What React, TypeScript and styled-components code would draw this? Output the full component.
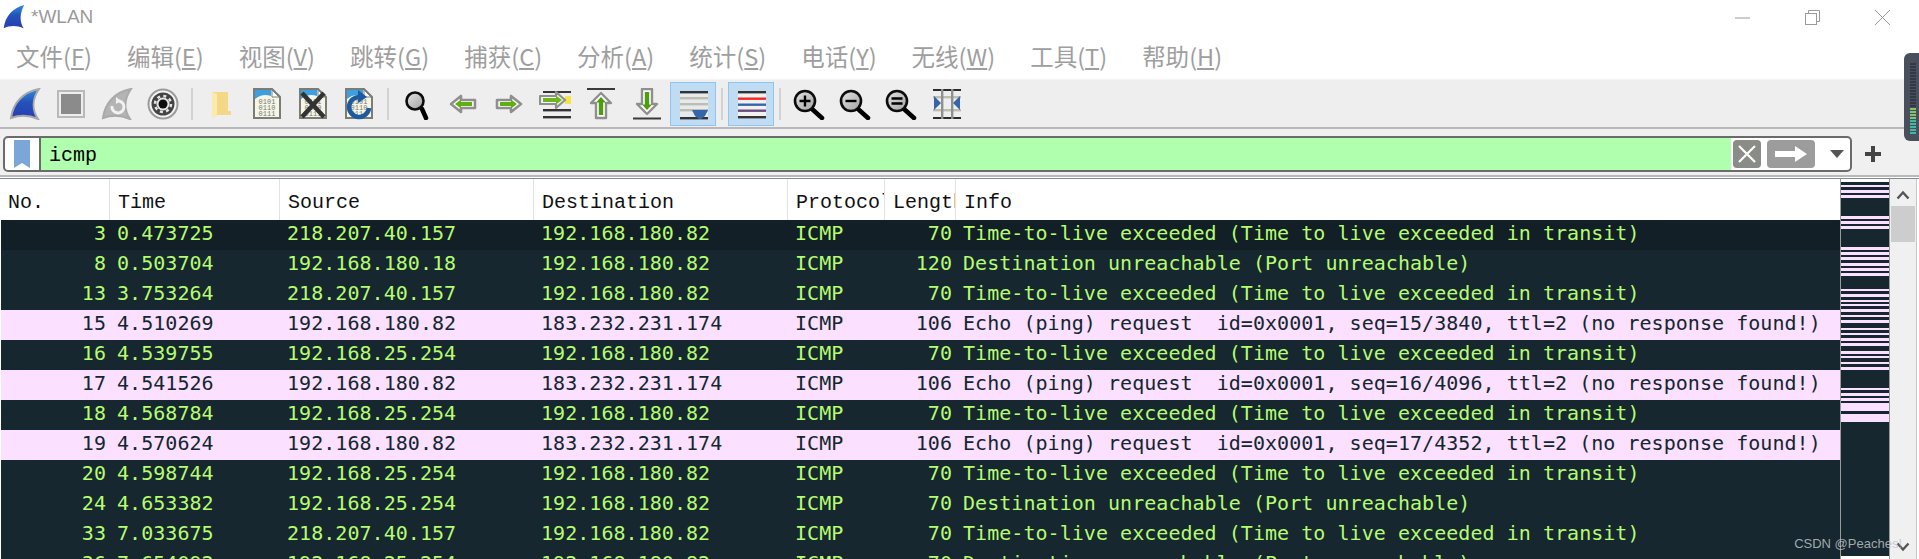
import React from 'react';
import styled, { createGlobalStyle } from 'styled-components';

const GlobalStyle = createGlobalStyle`
  html, body { margin: 0; padding: 0; background: #fff; }
  body { font-family: "Liberation Sans", sans-serif; overflow: hidden; }
`;

const Page = styled.div`
  position: relative;
  width: 1919px;
  height: 559px;
  overflow: hidden;
  display: flex;
  flex-direction: column;
  background: #fff;
`;

const TitleBar = styled.div`
  height: 34px;
  display: flex;
  align-items: center;
  padding: 0 2px 0 3px;
`;

const TitleText = styled.div`
  flex: 1;
  margin-left: 6px;
  font-size: 19px;
  color: #9a9a9a;
`;

const WinButton = styled.div`
  width: 70px;
  height: 34px;
  display: flex;
  align-items: center;
  justify-content: center;
`;

const MenuBar = styled.div`
  height: 43px;
  display: flex;
  align-items: center;
  gap: 35px;
  padding-left: 16px;
`;

const MenuItem = styled.div`
  font-family: "Noto Sans CJK SC", "Liberation Sans", sans-serif;
  font-size: 23.5px;
  line-height: 40px;
  color: #9e9e9e;
  white-space: nowrap;
  u { text-underline-offset: 2px; }
`;

const Toolbar = styled.div`
  height: 47px;
  margin-top: 2px;
  display: flex;
  align-items: center;
  padding-left: 2px;
  background: #eeeeee;
  border-top: 1px solid #f4f4f4;
  border-bottom: 2px solid #b8b8b8;
`;

const ToolButton = styled.div<{ $active?: boolean }>`
  width: 46px;
  height: 44px;
  box-sizing: border-box;
  display: flex;
  align-items: center;
  justify-content: center;
  background: ${({ $active }) => ($active ? '#bfdcf3' : 'transparent')};
  border: 1px solid ${({ $active }) => ($active ? '#8cc6f7' : 'transparent')};
`;

const ToolSep = styled.div`
  width: 12px;
  display: flex;
  justify-content: center;
  &::after {
    content: '';
    width: 2px;
    height: 32px;
    background: #d2d2d2;
  }
`;

const FilterBar = styled.div`
  height: 48px;
  box-sizing: border-box;
  padding: 7px 0 3px 3px;
  display: flex;
  align-items: flex-start;
  background: #f0f0f0;
  border-bottom: 2px solid #b8b8b8;
`;

const FilterBox = styled.div`
  width: 1849px;
  height: 36px;
  box-sizing: border-box;
  display: flex;
  align-items: stretch;
  background: #fff;
  border: 2px solid #6b6b6b;
  border-radius: 5px;
  overflow: hidden;
`;

const BookmarkSlot = styled.div`
  width: 34px;
  display: flex;
  align-items: center;
  justify-content: center;
  border-right: 2px solid #6b6b6b;
`;

const FilterInput = styled.div`
  flex: 1;
  padding: 2px 0 0 8px;
  display: flex;
  align-items: center;
  background: #afffaf;
  font-family: "Liberation Mono", monospace;
  font-size: 20px;
  color: #000;
`;

const FilterActions = styled.div`
  width: 119px;
  display: flex;
  align-items: center;
  padding-left: 2px;
  box-sizing: border-box;
`;

const ClearButton = styled.div`
  width: 28px;
  height: 28px;
  border-radius: 4px;
  background: #8a8c87;
  display: flex;
  align-items: center;
  justify-content: center;
`;

const ApplyButton = styled.div`
  width: 48px;
  height: 28px;
  margin-left: 6px;
  border-radius: 4px;
  background: #9c9c9c;
  display: flex;
  align-items: center;
  justify-content: center;
`;

const DropArrow = styled.div`
  margin-left: 15px;
  width: 0;
  height: 0;
  border-left: 7px solid transparent;
  border-right: 7px solid transparent;
  border-top: 8px solid #555;
`;

const PlusSlot = styled.div`
  margin: 10px 0 0 13px;
  display: flex;
`;

const PacketArea = styled.div`
  flex: 1;
  min-height: 0;
  margin-top: 1px;
  border-top: 1px solid #7f8b90;
  display: flex;
`;

const PacketList = styled.div`
  width: 1841px;
  box-sizing: border-box;
  overflow: hidden;
  border-right: 1px solid #9a9a9a;
`;

const dataColumns = '170px 254px 254px 97px 71px 1fr';

const HeaderRow = styled.div`
  display: grid;
  grid-template-columns: 110px ${dataColumns};
  height: 41px;
`;

const HeaderCell = styled.div`
  padding: 5px 0 0 8px;
  display: flex;
  align-items: center;
  overflow: hidden;
  white-space: nowrap;
  font-family: "Liberation Mono", monospace;
  font-size: 20px;
  color: #111;
  border-right: 1px solid #e2e2e2;
  &:last-child { border-right: 0; }
`;

const Row = styled.div<{ $kind: 'ttl' | 'ttlDark' | 'echo' }>`
  display: grid;
  grid-template-columns: 109px ${dataColumns};
  height: 30px;
  margin-left: 1px;
  align-items: center;
  font-family: "DejaVu Sans Mono", monospace;
  font-size: 20px;
  letter-spacing: 0.04px;
  line-height: 26px;
  white-space: pre;
  background: ${({ $kind }) =>
    $kind === 'echo' ? '#fce0ff' : $kind === 'ttlDark' ? '#121f26' : '#16272f'};
  color: ${({ $kind }) => ($kind === 'echo' ? '#12272e' : '#b5fc6f')};
`;

const Cell = styled.div<{ $right?: boolean }>`
  padding: 0 ${({ $right }) => ($right ? '4px' : '0')} 4px ${({ $right }) => ($right ? '0' : '7px')};
  text-align: ${({ $right }) => ($right ? 'right' : 'left')};
  overflow: hidden;
`;

const Minimap = styled.div`
  width: 48px;
  border-right: 1px solid #9a9a9a;
`;

const Scrollbar = styled.div`
  width: 26px;
  background: #f0f0f0;
  border-right: 1px solid #c8c8c8;
  display: flex;
  flex-direction: column;
  align-items: center;
  padding-top: 11px;
`;

const ScrollThumb = styled.div`
  width: 24px;
  height: 36px;
  margin-top: 6px;
  background: #cdcdcd;
`;

const ScrollDown = styled.div`
  margin-top: auto;
  margin-bottom: 7px;
  display: flex;
`;

const LevelMeter = styled.div`
  position: absolute;
  left: 1904px;
  top: 53px;
  width: 15px;
  height: 88px;
  border-radius: 6px 0 0 6px;
  background: #4a4f5e;
`;

const Watermark = styled.div`
  position: absolute;
  right: 17px;
  bottom: 8px;
  font-size: 13px;
  color: rgba(190, 195, 198, 0.85);
  white-space: nowrap;
`;

const FIN = 'M2 30C4 15 14 4 30 1C23 11 23 22 29 31C20 27 10 27 2 30Z';

const Ico = ({ children }: { children: React.ReactNode }) => (
  <svg width="32" height="32" viewBox="0 0 32 32">{children}</svg>
);

const SharkFin = ({ size = 32 }: { size?: number }) => (
  <svg width={size} height={size} viewBox="0 0 32 32">
    <defs>
      <linearGradient id="finBlue" x1="0" y1="0" x2="0" y2="1">
        <stop offset="0" stopColor="#2f8be0" />
        <stop offset="0.45" stopColor="#2352b8" />
        <stop offset="1" stopColor="#2a3cb6" />
      </linearGradient>
    </defs>
    <path d={FIN} fill="url(#finBlue)" stroke="#a9a9a9" strokeWidth="2" />
  </svg>
);

const TitleFin = () => (
  <svg width="22" height="24" viewBox="0 0 32 32" preserveAspectRatio="none">
    <path d="M1 31C3 15 14 4 31 0C24 11 24 22 30 31C20 27 10 27 1 31Z" fill="url(#finBlue)" />
  </svg>
);

const StopIcon = () => (
  <Ico>
    <rect x="3" y="3" width="26" height="26" fill="#eee" stroke="#b9b9b9" strokeWidth="2" />
    <rect x="6" y="6" width="20" height="20" fill="#8b8b8b" />
  </Ico>
);

const RestartIcon = () => (
  <Ico>
    <path d={FIN} fill="#b4b4b4" stroke="#a9a9a9" strokeWidth="2" />
    <path d="M18 13a6 6 0 1 1-7 5" fill="none" stroke="#f2f2f2" strokeWidth="3" />
    <path d="M15 9l5 4-5 3z" fill="#f2f2f2" />
  </Ico>
);

const OptionsIcon = () => (
  <Ico>
    <circle cx="16" cy="16" r="14.5" fill="#f4f4f4" stroke="#9b9b9b" strokeWidth="2" />
    <circle cx="16" cy="16" r="11.5" fill="#444" />
    <circle cx="16" cy="16" r="8" fill="none" stroke="#e6e6e6" strokeWidth="2.5" strokeDasharray="3 3.3" />
    <circle cx="16" cy="16" r="6.5" fill="#e6e6e6" />
    <circle cx="16" cy="16" r="4.5" fill="#0c0c0c" />
  </Ico>
);

const FolderIcon = () => (
  <Ico>
    <path d="M7 4h16v19h3v4H12l-5 3z" fill="#f4d888" />
    <path d="M7 4l5 2v21l-5 3z" fill="#fbe9ae" />
  </Ico>
);

const FileBase = () => (
  <>
    <path d="M3 1H21L29 9V30H3Z" fill="#f6f6e6" stroke="#7c7c76" strokeWidth="2" />
    <path d="M4 2H20V8C14 6 9 7 4 11Z" fill="#3b9fe0" />
    <path d="M21 2V9H28Z" fill="#fff" stroke="#7c7c76" strokeWidth="1" />
    <text x="16" y="16" textAnchor="middle" fontFamily="Liberation Mono" fontSize="7" fill="#777">0101</text>
    <text x="16" y="22" textAnchor="middle" fontFamily="Liberation Mono" fontSize="7" fill="#777">0110</text>
    <text x="16" y="28" textAnchor="middle" fontFamily="Liberation Mono" fontSize="7" fill="#777">0111</text>
  </>
);

const FileIcon = () => (
  <Ico>
    <FileBase />
  </Ico>
);

const CloseFileIcon = () => (
  <Ico>
    <FileBase />
    <path d="M5 5L27 29M27 5L5 29" stroke="#333" strokeWidth="4.5" />
  </Ico>
);

const ReloadFileIcon = () => (
  <Ico>
    <FileBase />
    <path d="M17 9A10 10 0 1 0 26 20" fill="none" stroke="#1d5a9e" strokeWidth="4.5" />
    <path d="M15 2l9 7-9 6z" fill="#1d5a9e" />
  </Ico>
);

const Lens = ({ children, cx = 12, r = 10, to = 29 }: { children?: React.ReactNode; cx?: number; r?: number; to?: number }) => (
  <Ico>
    <defs>
      <linearGradient id="lensFill" x1="0" y1="0" x2="1" y2="1">
        <stop offset="0" stopColor="#e4e4e4" />
        <stop offset="1" stopColor="#a2a2a2" />
      </linearGradient>
    </defs>
    <line x1={cx + 7} y1="21" x2={to} y2="30" stroke="#000" strokeWidth="4.5" strokeLinecap="round" />
    <circle cx={cx} cy="13" r={r} fill="url(#lensFill)" stroke="#0c0c0c" strokeWidth="2.6" />
    {children}
  </Ico>
);

const ArrowLeftIcon = () => (
  <Ico>
    <path d="M4 16L14 8V12H28V20H14V24Z" fill="#fff" stroke="#8f8f8f" strokeWidth="2.6" strokeLinejoin="round" />
    <path d="M8 16L14 11.5V14H25V18H14V20.5Z" fill="#5fae12" />
  </Ico>
);

const ArrowRightIcon = () => (
  <Ico>
    <path d="M28 16L18 8V12H4V20H18V24Z" fill="#fff" stroke="#8f8f8f" strokeWidth="2.6" strokeLinejoin="round" />
    <path d="M24 16L18 11.5V14H7V18H18V20.5Z" fill="#5fae12" />
  </Ico>
);

const JumpIcon = () => (
  <Ico>
    <rect x="4" y="3" width="28" height="2" fill="#333" />
    <rect x="4" y="21" width="28" height="2.4" fill="#333" />
    <rect x="4" y="28" width="28" height="2.4" fill="#333" />
    <rect x="26" y="8" width="6" height="8" fill="#f4e34a" />
    <path d="M26 12L17 4V8H1V16H17V20Z" fill="#f5f5f5" stroke="#8f8f8f" strokeWidth="2.2" strokeLinejoin="round" />
    <path d="M23 12L17 7.5V10H4V14H17V16.5Z" fill="#6fb51c" />
  </Ico>
);

const TopIcon = () => (
  <Ico>
    <rect x="2" y="0" width="28" height="2" fill="#3a3a3a" />
    <path d="M16 5L26 15H21V30H11V15H6Z" fill="#fff" stroke="#8f8f8f" strokeWidth="2.4" strokeLinejoin="round" />
    <path d="M16 9L21 14.5H18.2V27H13.8V14.5H11Z" fill="#4f9c0e" />
  </Ico>
);

const BottomIcon = () => (
  <Ico>
    <rect x="2" y="29.5" width="28" height="2" fill="#3a3a3a" />
    <path d="M16 26L26 16H21V1H11V16H6Z" fill="#fff" stroke="#8f8f8f" strokeWidth="2.4" strokeLinejoin="round" />
    <path d="M16 22L21 16.5H18.2V4H13.8V16.5H11Z" fill="#4f9c0e" />
  </Ico>
);

const AutoScrollIcon = () => (
  <Ico>
    <rect x="3" y="4" width="28" height="26" fill="#e6eaec" />
    <rect x="3" y="3" width="28" height="2.4" fill="#333" />
    <rect x="3" y="9" width="28" height="2.4" fill="#bdbdb1" />
    <rect x="3" y="15" width="28" height="2.4" fill="#bdbdb1" />
    <rect x="3" y="21" width="28" height="2.4" fill="#bdbdb1" />
    <rect x="3" y="29" width="28" height="2.4" fill="#333" />
    <path d="M15 22H31L28 28L24 31H22L18 28Z" fill="#3566a8" />
  </Ico>
);

const ColorizeIcon = () => (
  <Ico>
    <rect x="3" y="3" width="28" height="27" fill="#f1f1ee" />
    <rect x="3" y="3" width="28" height="2.4" fill="#333" />
    <rect x="3" y="9.5" width="28" height="2.4" fill="#ee2a2a" />
    <rect x="3" y="15.5" width="28" height="2.4" fill="#3566a8" />
    <rect x="3" y="21.5" width="28" height="2.4" fill="#6b4a7d" />
    <rect x="3" y="28" width="28" height="2.4" fill="#333" />
  </Ico>
);

const ResizeIcon = () => (
  <Ico>
    <rect x="2" y="1" width="28" height="2" fill="#2b2b2b" />
    <rect x="2" y="29" width="28" height="2" fill="#2b2b2b" />
    <rect x="2" y="8" width="28" height="2.4" fill="#bdbdb1" />
    <rect x="2" y="21" width="28" height="2.4" fill="#bdbdb1" />
    <rect x="10" y="1" width="2.4" height="30" fill="#8e928c" />
    <rect x="20" y="1" width="2.4" height="30" fill="#8e928c" />
    <path d="M3 8L10 15L3 22Z" fill="#3566a8" />
    <path d="M29 8L22 15L29 22Z" fill="#3566a8" />
  </Ico>
);

const ChevronUp = () => (
  <svg width="14" height="10" viewBox="0 0 14 10">
    <path d="M1.5 8.5L7 2.5L12.5 8.5" fill="none" stroke="#555" strokeWidth="2.4" />
  </svg>
);

const ChevronDown = () => (
  <svg width="14" height="10" viewBox="0 0 14 10">
    <path d="M1.5 1.5L7 7.5L12.5 1.5" fill="none" stroke="#555" strokeWidth="2.4" />
  </svg>
);

// minimap stripes, [top, bottom] in page pixels
const STRIPES: [number, number][] = [
  [185, 187], [190, 193], [195, 198], [216, 219], [221, 224], [226, 229],
  [247, 250], [252, 255], [257, 260], [263, 266], [268, 271], [273, 276],
  [289, 291], [294, 297], [300, 302], [304, 306], [309, 312], [315, 317],
  [320, 323], [328, 330], [333, 335], [338, 341], [343, 346], [351, 354],
  [356, 358], [362, 364], [367, 370], [388, 390], [393, 396], [398, 401],
  [403, 411], [414, 422],
];

const MinimapChart = () => (
  <svg width="48" height="380" viewBox="0 179 48 380" style={{ display: 'block' }}>
    <rect x="0" y="182" width="48" height="374" fill="#16272f" />
    {STRIPES.map(([a, b]) => (
      <rect key={a} x="0" y={a} width="48" height={b - a} fill="#fce0ff" />
    ))}
  </svg>
);

const METER_BARS = Array.from({ length: 24 }, (_, i) => i);

const MeterChart = () => (
  <svg width="15" height="88" viewBox="0 0 15 88">
    {METER_BARS.map((i) => {
      const lit = i >= 15;
      const fill = !lit ? '#343844' : i < 19 ? '#7fc46c' : '#3fb8a0';
      return <rect key={i} x="6" y={10 + i * 3} width="6" height="2" fill={fill} />;
    })}
  </svg>
);

const MENU = [
  ['文件', 'F'], ['编辑', 'E'], ['视图', 'V'], ['跳转', 'G'], ['捕获', 'C'], ['分析', 'A'],
  ['统计', 'S'], ['电话', 'Y'], ['无线', 'W'], ['工具', 'T'], ['帮助', 'H'],
];

const HEADERS = ['No.', 'Time', 'Source', 'Destination', 'Protocol', 'Length', 'Info'];

const TTL = 'Time-to-live exceeded (Time to live exceeded in transit)';
const PORT = 'Destination unreachable (Port unreachable)';
const echo = (seq: string) =>
  `Echo (ping) request  id=0x0001, seq=${seq}, ttl=2 (no response found!)`;

const ME = '192.168.180.82';
const PACKETS = [
  { no: 3, time: '0.473725', src: '218.207.40.157', dst: ME, len: 70, info: TTL, kind: 'ttlDark' },
  { no: 8, time: '0.503704', src: '192.168.180.18', dst: ME, len: 120, info: PORT, kind: 'ttl' },
  { no: 13, time: '3.753264', src: '218.207.40.157', dst: ME, len: 70, info: TTL, kind: 'ttl' },
  { no: 15, time: '4.510269', src: ME, dst: '183.232.231.174', len: 106, info: echo('15/3840'), kind: 'echo' },
  { no: 16, time: '4.539755', src: '192.168.25.254', dst: ME, len: 70, info: TTL, kind: 'ttl' },
  { no: 17, time: '4.541526', src: ME, dst: '183.232.231.174', len: 106, info: echo('16/4096'), kind: 'echo' },
  { no: 18, time: '4.568784', src: '192.168.25.254', dst: ME, len: 70, info: TTL, kind: 'ttl' },
  { no: 19, time: '4.570624', src: ME, dst: '183.232.231.174', len: 106, info: echo('17/4352'), kind: 'echo' },
  { no: 20, time: '4.598744', src: '192.168.25.254', dst: ME, len: 70, info: TTL, kind: 'ttl' },
  { no: 24, time: '4.653382', src: '192.168.25.254', dst: ME, len: 70, info: PORT, kind: 'ttl' },
  { no: 33, time: '7.033675', src: '218.207.40.157', dst: ME, len: 70, info: TTL, kind: 'ttl' },
  { no: 36, time: '7.654092', src: '192.168.25.254', dst: ME, len: 70, info: PORT, kind: 'ttl' },
] as const;

const App: React.FC = () => (
  <Page>
    <GlobalStyle />
    <TitleBar>
      <TitleFin />
      <TitleText>*WLAN</TitleText>
      <WinButton>
        <svg width="15" height="15" viewBox="0 0 15 15">
          <line x1="0" y1="8" x2="15" y2="8" stroke="#9a9a9a" strokeWidth="1" />
        </svg>
      </WinButton>
      <WinButton>
        <svg width="15" height="15" viewBox="0 0 15 15">
          <rect x="0.5" y="3.5" width="11" height="11" fill="#fff" stroke="#9a9a9a" />
          <path d="M3.5 3.5V0.5H14.5V11.5H11.5" fill="none" stroke="#9a9a9a" />
        </svg>
      </WinButton>
      <WinButton>
        <svg width="15" height="15" viewBox="0 0 15 15">
          <path d="M0 0L15 15M15 0L0 15" stroke="#9a9a9a" strokeWidth="1" />
        </svg>
      </WinButton>
    </TitleBar>

    <MenuBar>
      {MENU.map(([label, key]) => (
        <MenuItem key={key}>
          {label}(<u>{key}</u>)
        </MenuItem>
      ))}
    </MenuBar>

    <Toolbar>
      <ToolButton><SharkFin /></ToolButton>
      <ToolButton><StopIcon /></ToolButton>
      <ToolButton><RestartIcon /></ToolButton>
      <ToolButton><OptionsIcon /></ToolButton>
      <ToolSep />
      <ToolButton><FolderIcon /></ToolButton>
      <ToolButton><FileIcon /></ToolButton>
      <ToolButton><CloseFileIcon /></ToolButton>
      <ToolButton><ReloadFileIcon /></ToolButton>
      <ToolSep />
      <ToolButton><Lens cx={14} r={8.5} to={25} /></ToolButton>
      <ToolButton><ArrowLeftIcon /></ToolButton>
      <ToolButton><ArrowRightIcon /></ToolButton>
      <ToolButton><JumpIcon /></ToolButton>
      <ToolButton><TopIcon /></ToolButton>
      <ToolButton><BottomIcon /></ToolButton>
      <ToolButton $active><AutoScrollIcon /></ToolButton>
      <ToolSep />
      <ToolButton $active><ColorizeIcon /></ToolButton>
      <ToolSep />
      <ToolButton>
        <Lens><path d="M6.5 13h11M12 7.5v11" stroke="#000" strokeWidth="2.4" /></Lens>
      </ToolButton>
      <ToolButton>
        <Lens><path d="M6.5 13h11" stroke="#000" strokeWidth="2.4" /></Lens>
      </ToolButton>
      <ToolButton>
        <Lens><path d="M6.5 10.5h11M6.5 15.5h11" stroke="#000" strokeWidth="2.4" /></Lens>
      </ToolButton>
      <ToolButton><ResizeIcon /></ToolButton>
    </Toolbar>

    <FilterBar>
      <FilterBox>
        <BookmarkSlot>
          <svg width="16" height="28" viewBox="0 0 16 28">
            <path d="M0 0H16V28L8 23L0 28Z" fill="#7ba6d8" />
          </svg>
        </BookmarkSlot>
        <FilterInput>icmp</FilterInput>
        <FilterActions>
          <ClearButton>
            <svg width="20" height="20" viewBox="0 0 20 20">
              <path d="M2 2L18 18M18 2L2 18" stroke="#fff" strokeWidth="2.2" />
            </svg>
          </ClearButton>
          <ApplyButton>
            <svg width="34" height="18" viewBox="0 0 34 18">
              <path d="M1 6H21V1L33 9L21 17V12H1Z" fill="#fff" />
            </svg>
          </ApplyButton>
          <DropArrow />
        </FilterActions>
      </FilterBox>
      <PlusSlot>
        <svg width="16" height="16" viewBox="0 0 16 16">
          <path d="M6 0H10V6H16V10H10V16H6V10H0V6H6Z" fill="#444" />
        </svg>
      </PlusSlot>
    </FilterBar>

    <PacketArea>
      <PacketList>
        <HeaderRow>
          {HEADERS.map((h) => (
            <HeaderCell key={h}>{h}</HeaderCell>
          ))}
        </HeaderRow>
        {PACKETS.map((p) => (
          <Row key={p.no} $kind={p.kind}>
            <Cell $right>{p.no}</Cell>
            <Cell>{p.time}</Cell>
            <Cell>{p.src}</Cell>
            <Cell>{p.dst}</Cell>
            <Cell>ICMP</Cell>
            <Cell $right>{p.len}</Cell>
            <Cell>{p.info}</Cell>
          </Row>
        ))}
      </PacketList>
      <Minimap>
        <MinimapChart />
      </Minimap>
      <Scrollbar>
        <ChevronUp />
        <ScrollThumb />
        <ScrollDown>
          <ChevronDown />
        </ScrollDown>
      </Scrollbar>
    </PacketArea>

    <LevelMeter>
      <MeterChart />
    </LevelMeter>
    <Watermark>CSDN @Peaches!</Watermark>
  </Page>
);

export default App;
